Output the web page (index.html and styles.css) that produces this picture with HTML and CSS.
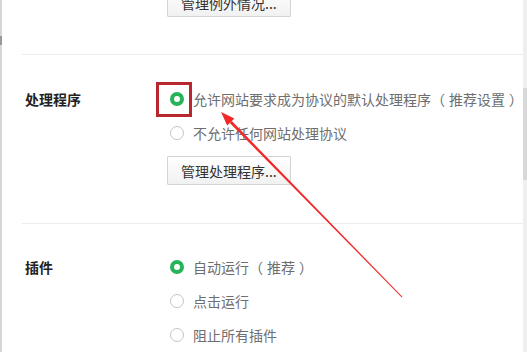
FILE: index.html
```html
<!DOCTYPE html>
<html lang="zh-CN">
<head>
<meta charset="utf-8">
<link rel="stylesheet" href="styles.css">
</head>
<body>
<div class="page">
  <div class="leftbar"><span class="mark"></span></div>
  <div class="content">
    <section class="section first">
      <div class="label"></div>
      <div class="options">
        <button class="btn">管理例外情况...</button>
      </div>
    </section>
    <section class="section">
      <div class="label">处理程序</div>
      <div class="options">
        <div class="opt"><span class="radio on"></span><span class="txt">允许网站要求成为协议的默认处理程序<span class="lp">（</span>推荐设置<span class="rp">）</span></span><span class="hl"></span></div>
        <div class="opt"><span class="radio"></span><span class="txt">不允许任何网站处理协议</span></div>
        <button class="btn">管理处理程序...</button>
      </div>
    </section>
    <section class="section last">
      <div class="label">插件</div>
      <div class="options">
        <div class="opt"><span class="radio on"></span><span class="txt">自动运行<span class="lp">（</span>推荐<span class="rp">）</span></span></div>
        <div class="opt"><span class="radio"></span><span class="txt">点击运行</span></div>
        <div class="opt"><span class="radio"></span><span class="txt">阻止所有插件</span></div>
      </div>
    </section>
  </div>
  <div class="scroll"><span class="thumb"></span></div>
  <svg class="arrow" width="527" height="352" viewBox="0 0 527 352">
    <polygon points="221,112 234.4,118.5 227.2,125.5" fill="#f02828"/>
    <polygon points="231.8,121 229.8,123 401.8,297.4 402.4,296.8" fill="#f02828"/>
  </svg>
</div>
</body>
</html>
```
FILE: styles.css
```css
html, body {
  margin: 0;
  padding: 0;
  background: #fff;
}
body {
  font-family: "Noto Sans CJK SC", "Noto Sans", sans-serif;
  font-size: 14px;
  color: #666;
}
.page {
  position: relative;
  display: flex;
  width: 527px;
  height: 352px;
  overflow: hidden;
}
.leftbar {
  width: 2px;
  background: #d6d6d6;
  flex: none;
  position: relative;
}
.mark {
  position: absolute;
  left: 0;
  top: 36px;
  width: 2px;
  height: 9px;
  background: #999;
}
.content {
  flex: 1;
  margin-left: 20px;
  margin-top: -12px;
}
.scroll {
  width: 6px;
  background: #efefef;
  flex: none;
  position: relative;
}
.thumb {
  position: absolute;
  left: 0;
  top: 88px;
  width: 6px;
  height: 92px;
  background: #d8d8d8;
}
.section {
  display: grid;
  grid-template-columns: 145px 1fr;
  border-bottom: 1px solid #ececec;
  padding: 27px 0 38px;
}
.section.first {
  padding-top: 0;
  padding-bottom: 37px;
}
.section.last {
  border-bottom: none;
  padding-top: 26px;
}
.label {
  padding-left: 3px;
  font-weight: bold;
  color: #222;
  line-height: 34px;
}
.options {
  display: flex;
  flex-direction: column;
  align-items: flex-start;
}
.opt {
  position: relative;
  display: flex;
  align-items: center;
  height: 34px;
  white-space: nowrap;
}
.radio {
  box-sizing: border-box;
  width: 14px;
  height: 14px;
  border-radius: 50%;
  border: 1px solid #c4c4c4;
  background: #fff;
  margin-left: 3px;
  margin-right: 9px;
  flex: none;
}
.radio.on {
  border: 4px solid #27b35a;
  background: #fff;
}
.txt {
  color: #6e6e6e;
}
.lp {
  padding-right: 4px;
}
.rp {
  padding-left: 4px;
}
.hl {
  position: absolute;
  left: -11px;
  top: 0;
  width: 36px;
  height: 35px;
  box-sizing: border-box;
  border: 3px solid #b8262e;
}
.btn {
  margin-top: 6px;
  height: 29px;
  padding: 0 13px;
  font-family: inherit;
  font-size: 14px;
  color: #333;
  border: 1px solid #d4d4d4;
  border-radius: 1px;
  background: linear-gradient(#ffffff, #f1f1f1);
}
.first .btn {
  margin-top: 0;
}
.arrow {
  position: absolute;
  left: 0;
  top: 0;
  pointer-events: none;
}
```
